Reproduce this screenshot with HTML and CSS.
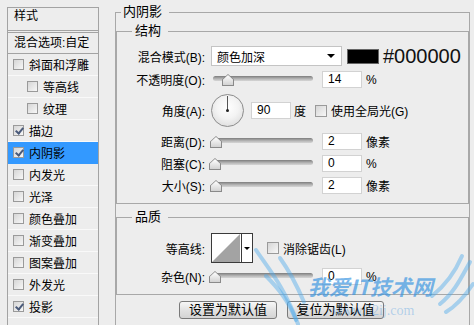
FILE: index.html
```html
<!DOCTYPE html>
<html lang="zh-CN">
<head>
  <meta charset="UTF-8">
  <title>图层样式 - 内阴影</title>
  <link rel="stylesheet" href="styles.css">
</head>
<body>

  <div class="dialog">

    <!-- Style list -->
    <aside class="styles-list">
      <div class="list-head">样式</div>
      <div class="list-blend">混合选项:自定</div>
      <ul class="list-items">
        <li><span class="cb"></span>斜面和浮雕</li>
        <li class="sub"><span class="cb"></span>等高线</li>
        <li class="sub"><span class="cb"></span>纹理</li>
        <li><span class="cb checked"></span>描边</li>
        <li class="active"><span class="cb checked"></span>内阴影</li>
        <li><span class="cb"></span>内发光</li>
        <li><span class="cb"></span>光泽</li>
        <li><span class="cb"></span>颜色叠加</li>
        <li><span class="cb"></span>渐变叠加</li>
        <li><span class="cb"></span>图案叠加</li>
        <li><span class="cb"></span>外发光</li>
        <li><span class="cb checked"></span>投影</li>
      </ul>
    </aside>

    <!-- Inner shadow settings -->
    <main class="panel">
      <fieldset class="group outer">
        <legend>内阴影</legend>

        <fieldset class="group inner structure">
          <legend>结构</legend>

          <div class="row row-mode">
            <div class="lbl">混合模式(B):</div>
            <div class="select"><span>颜色加深</span><span class="arrow"></span></div>
            <div class="swatch"></div>
            <div class="hex">#000000</div>
          </div>

          <div class="row row-slider first">
            <div class="lbl">不透明度(O):</div>
            <div class="slider"><div class="track"></div><span class="thumb" style="left: 9px"></span></div>
            <div class="num">14</div>
            <div class="unit">%</div>
          </div>

          <div class="row row-angle">
            <div class="lbl">角度(A):</div>
            <div class="dial"></div>
            <div class="num num-angle">90</div>
            <div class="unit">度</div>
            <span class="cb cb-lg gap-global"></span>
            <div class="check-text">使用全局光(G)</div>
          </div>

          <div class="row row-slider after-angle">
            <div class="lbl">距离(D):</div>
            <div class="slider"><div class="track"></div><span class="thumb" style="left: -3px"></span></div>
            <div class="num">2</div>
            <div class="unit">像素</div>
          </div>

          <div class="row row-slider">
            <div class="lbl">阻塞(C):</div>
            <div class="slider"><div class="track"></div><span class="thumb" style="left: -4px"></span></div>
            <div class="num">0</div>
            <div class="unit">%</div>
          </div>

          <div class="row row-slider">
            <div class="lbl">大小(S):</div>
            <div class="slider"><div class="track"></div><span class="thumb" style="left: -3px"></span></div>
            <div class="num">2</div>
            <div class="unit">像素</div>
          </div>
        </fieldset>

        <fieldset class="group inner quality">
          <legend>品质</legend>

          <div class="row row-contour">
            <div class="lbl">等高线:</div>
            <div class="contour">
              <div class="contour-preview">
                <svg width="28" height="28" viewBox="0 0 28 28">
                  <polygon points="0,28 28,0 28,28" fill="#a3a3a3"/>
                </svg>
              </div>
              <div class="contour-arrow"><span class="arrow small"></span></div>
            </div>
            <span class="cb cb-lg gap-aa"></span>
            <div class="check-text">消除锯齿(L)</div>
          </div>

          <div class="row row-slider">
            <div class="lbl">杂色(N):</div>
            <div class="slider"><div class="track"></div><span class="thumb" style="left: -4px"></span></div>
            <div class="num">0</div>
            <div class="unit">%</div>
          </div>
        </fieldset>

        <div class="buttons">
          <div class="btn">设置为默认值</div>
          <div class="btn btn-reset">复位为默认值</div>
        </div>
      </fieldset>
    </main>

    <!-- site watermark -->
    <div class="watermark">
      <svg class="wings" width="300" height="85" viewBox="180 240 300 85">
        <path d="M256 250 C 268 268, 284 286, 298 324" />
        <path d="M266 276 C 278 288, 288 300, 296 320" />
        <path d="M280 258 C 290 272, 298 288, 304 302" />
        <path d="M440 304 C 455 292, 462 276, 470 262" />
        <path d="M432 296 C 447 284, 456 270, 462 256" />
        <path d="M446 312 C 456 306, 465 296, 473 284" />
      </svg>
      <div class="wm-title">我爱IT技术网</div>
      <div class="wm-url">www.52ij.com</div>
    </div>
  </div>

</body>
</html>
```

FILE: styles.css
```css
body {
  margin: 0;
  background: #ededed;
  font-family: "Liberation Sans", "Noto Sans CJK SC", sans-serif;
  font-size: 12px;
  color: #000;
  overflow: hidden;
}

.dialog {
  position: relative;
  display: flex;
  align-items: flex-start;
  height: 325px;
  overflow: hidden;
}

/* Style list */
.styles-list {
  margin: 7px 0 0 7px;
  width: 92px;
  height: 330px;
  box-sizing: border-box;
  border: 1px solid #a3a3a3;
}

.list-head {
  height: 22px;
  line-height: 17px;
  padding-left: 6px;
  border-bottom: 1px solid #a3a3a3;
}

.list-blend {
  margin-top: 1px;
  height: 20px;
  line-height: 20px;
  padding-left: 6px;
  border-top: 1px solid #a3a3a3;
  border-bottom: 1px solid #a3a3a3;
  white-space: nowrap;
}

.list-items {
  list-style: none;
  margin: 0;
  padding: 0;
}

.list-items li {
  height: 21px;
  border-bottom: 1px solid #f9f9f9;
  display: flex;
  align-items: center;
  padding-left: 5px;
}

.list-items li.sub {
  padding-left: 19px;
}

.list-items li.active {
  background: #3399ff;
  border-bottom-color: #3399ff;
}

.cb {
  flex: none;
  width: 11px;
  height: 11px;
  box-sizing: border-box;
  margin-right: 5px;
  border: 1px solid #9a9a9a;
  background: linear-gradient(135deg, #d6d6d6, #f7f7f7);
  position: relative;
}

.cb.checked::after {
  content: "";
  position: absolute;
  left: 3px;
  top: 0px;
  width: 3px;
  height: 6px;
  border-right: 2px solid #4a5a7a;
  border-bottom: 2px solid #4a5a7a;
  transform: rotate(40deg);
}

.cb-lg {
  width: 12px;
  height: 12px;
  margin-right: 4px;
}

/* Right panel */
.panel {
  margin: 4px 0 0 16px;
}

fieldset.group {
  margin: 0;
  padding: 0;
  min-width: 0;
  border: 1px solid #a8a8a8;
}

fieldset.group legend {
  font-size: 13px;
  line-height: 16px;
  white-space: nowrap;
}

.outer {
  width: 355px;
  height: 345px;
  box-sizing: border-box;
  padding: 0 9px 0 10px;
}

.outer > legend {
  margin-left: 5px;
  padding: 0 7px 0 2px;
}

.inner > legend {
  margin-left: 15px;
  padding: 0 7px 0 3px;
}

.structure {
  margin-top: 3px !important;
  padding-bottom: 9px !important;
}

.quality {
  margin-top: 5px !important;
  padding-bottom: 9px !important;
}

.row {
  display: flex;
  align-items: center;
  white-space: nowrap;
}

.lbl {
  flex: none;
  width: 88px;
  text-align: right;
}

.row-mode {
  height: 20px;
  margin-top: 7px;
}

.row-slider {
  height: 17px;
  margin-top: 5px;
}

.row-slider.after-angle {
  margin-top: 6px;
}

.row-angle {
  height: 33px;
  margin-top: 6px;
}

.row-contour {
  height: 30px;
  margin-top: 8px;
}

.select {
  flex: none;
  margin-left: 6px;
  width: 131px;
  height: 20px;
  box-sizing: border-box;
  background: #fff;
  border: 1px solid #c4c4c4;
  display: flex;
  align-items: center;
  justify-content: space-between;
  padding: 0 6px 0 5px;
}

.arrow {
  width: 0;
  height: 0;
  border-left: 4px solid transparent;
  border-right: 4px solid transparent;
  border-top: 4px solid #000;
}

.arrow.small {
  border-left-width: 3px;
  border-right-width: 3px;
  border-top-width: 3px;
}

.swatch {
  flex: none;
  margin-left: 5px;
  width: 32px;
  height: 15px;
  box-sizing: border-box;
  background: #000;
  border: 1px solid #666;
}

.hex {
  flex: none;
  margin-left: 4px;
  font-family: "Liberation Sans", sans-serif;
  font-size: 20px;
  line-height: 20px;
  color: #111;
}

/* Sliders */
.slider {
  flex: none;
  position: relative;
  width: 100px;
  height: 17px;
  margin-left: 8px;
}

.track {
  margin-top: 5px;
  height: 5px;
  border-radius: 3px;
  background: linear-gradient(#7d7d7d, #b9b9b9 60%, #d6d6d6);
}

.thumb {
  position: absolute;
  top: 3px;
  width: 12px;
  height: 12px;
  background: #8a8a8a;
  clip-path: polygon(50% 0, 100% 45%, 100% 100%, 0 100%, 0 45%);
}

.thumb::after {
  content: "";
  position: absolute;
  left: 1px;
  top: 1px;
  right: 1px;
  bottom: 1px;
  background: linear-gradient(#ffffff, #d2d2d2);
  clip-path: polygon(50% 0, 100% 45%, 100% 100%, 0 100%, 0 45%);
}

.num {
  flex: none;
  margin-left: 9px;
  width: 40px;
  height: 17px;
  box-sizing: border-box;
  background: #fff;
  border: 1px solid #d2d2d2;
  padding-left: 5px;
  line-height: 15px;
}

.num-angle {
  margin-left: 7px;
}

.unit {
  margin-left: 4px;
}

.row-angle .unit {
  margin-left: 3px;
}

.gap-global {
  margin-left: 9px;
}

.gap-aa {
  margin-left: 14px;
}

/* Angle dial */
.dial {
  flex: none;
  position: relative;
  margin-left: 6px;
  width: 33px;
  height: 33px;
  box-sizing: border-box;
  border-radius: 50%;
  border: 1px solid #8c8c8c;
  background: radial-gradient(circle at 50% 40%, #ffffff 0%, #f3f3f3 45%, #d4d4d4 100%);
}

.dial::before {
  content: "";
  position: absolute;
  left: 15px;
  top: 1px;
  width: 1px;
  height: 15px;
  background: #555;
}

.dial::after {
  content: "";
  position: absolute;
  left: 14px;
  top: 14px;
  width: 3px;
  height: 3px;
  border-radius: 50%;
  background: #222;
}

/* Contour picker */
.contour {
  flex: none;
  margin-left: 6px;
  display: flex;
  width: 42px;
  height: 30px;
  box-sizing: border-box;
  border: 1px solid #3a3a3a;
  background: #fff;
}

.contour-preview {
  width: 29px;
  height: 28px;
  display: flex;
  align-items: flex-end;
}

.contour-preview svg {
  display: block;
}

.contour-arrow {
  flex: 1;
  border-left: 1px solid #3a3a3a;
  display: flex;
  align-items: center;
  justify-content: center;
}

/* Buttons */
.buttons {
  display: flex;
  gap: 10px;
  margin-top: 6px;
  padding-left: 63px;
}

.btn {
  width: 98px;
  height: 18px;
  box-sizing: border-box;
  border: 1px solid #7a7a7a;
  border-radius: 3px;
  background: linear-gradient(#f7f7f7, #e2e2e2 50%, #d4d4d4);
  font-size: 13px;
  line-height: 16px;
  text-align: center;
}

.btn-reset {
  width: 97px;
}

/* Watermark */
.watermark {
  position: absolute;
  left: 180px;
  top: 240px;
  width: 300px;
  height: 85px;
  pointer-events: none;
}

.wings {
  position: absolute;
  left: 0;
  top: 0;
  fill: none;
  stroke: rgba(80, 170, 235, 0.45);
  stroke-width: 4;
  stroke-linecap: round;
}

.wm-title {
  position: absolute;
  left: 128px;
  top: 33px;
  font-family: "Noto Sans CJK SC", sans-serif;
  font-size: 21px;
  line-height: 26px;
  font-weight: bold;
  font-style: italic;
  color: rgba(60, 150, 225, 0.7);
  white-space: nowrap;
}

.wm-url {
  position: absolute;
  left: 152px;
  top: 63px;
  font-family: "Liberation Serif", serif;
  font-size: 14px;
  color: rgba(60, 150, 225, 0.35);
  white-space: nowrap;
}
```
